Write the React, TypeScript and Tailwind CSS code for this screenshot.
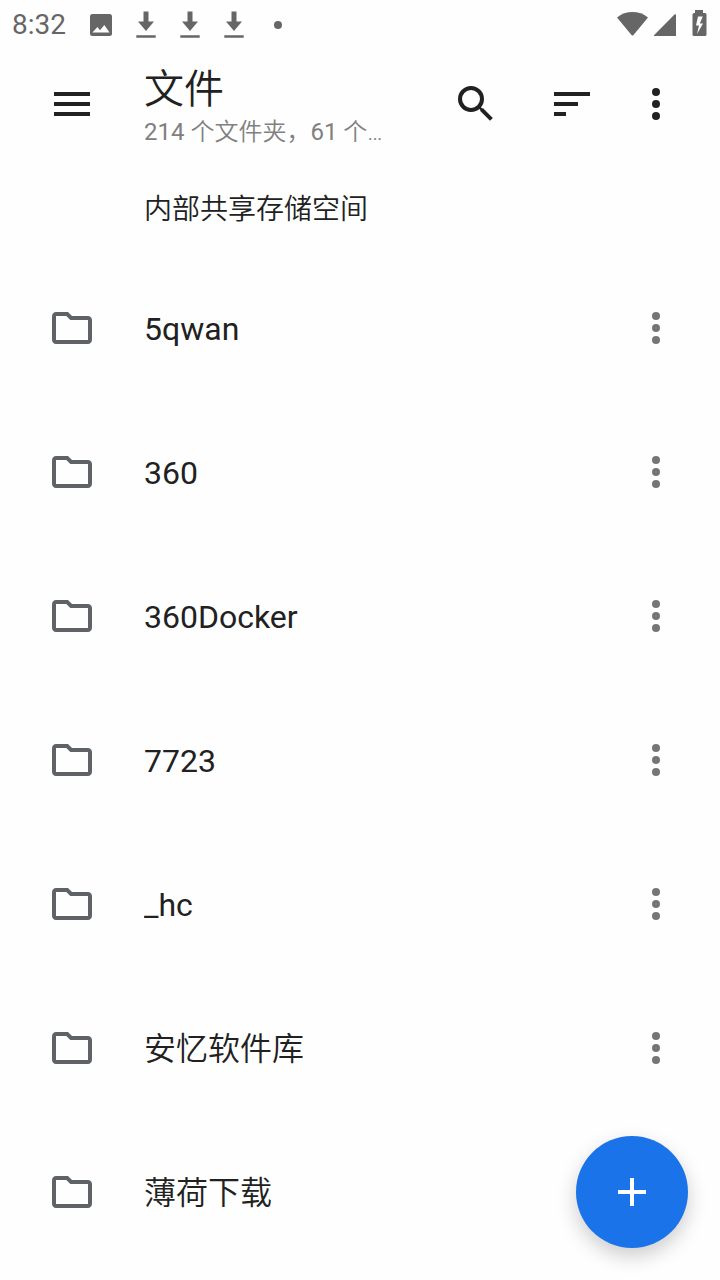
import type { ReactNode } from 'react'
import clsx from 'clsx'

const folders = ['5qwan', '360', '360Docker', '7723', '_hc', '安忆软件库', '薄荷下载']

// Chinese names are set a little lighter than latin ones
const isChinese = (text: string) => /[\u4e00-\u9fff]/.test(text)

function Icon({ children }: { children: ReactNode }) {
    return (
        <svg viewBox="0 0 24 24" className="size-12 shrink-0" fill="currentColor" aria-hidden="true">
            {children}
        </svg>
    )
}

function MoreIcon() {
    return (
        <Icon>
            <circle cx="12" cy="6" r="2" />
            <circle cx="12" cy="12" r="2" />
            <circle cx="12" cy="18" r="2" />
        </Icon>
    )
}

function DownloadIcon() {
    return (
        <svg viewBox="0 0 20 28" className="h-7 w-5" fill="currentColor" aria-hidden="true">
            <path d="M7.5 .5h5v10h5.500L10 20 2 10.500h5.500zM.3 24.300h19.400v2.400H.3z" />
        </svg>
    )
}

function StatusBar() {
    return (
        <div className="flex h-12 items-center justify-between px-3 text-[#666666]">
            <div className="flex items-center gap-6 pt-0.5">
                <span className="text-[28px] leading-8">8:32</span>
                <svg viewBox="1 1 22 22" className="size-[22px]" fill="currentColor" aria-hidden="true">
                    <path
                        fillRule="evenodd"
                        d="M3.500 1h17A2.500 2.500 0 0 1 23 3.500v17a2.500 2.500 0 0 1-2.500 2.500h-17A2.500 2.500 0 0 1 1 20.500v-17A2.500 2.500 0 0 1 3.500 1zM3.500 19.500h17l-5.200-7.500-4.300 5.200-2.600-3.200z"
                    />
                </svg>
                <DownloadIcon />
                <DownloadIcon />
                <DownloadIcon />
                <div className="flex w-5 justify-center">
                    <span className="size-2 rounded-full bg-[#666666]" />
                </div>
            </div>
            <div className="flex items-center">
                <svg viewBox="0 0 32 28" className="h-7 w-8" fill="currentColor" aria-hidden="true">
                    <path d="M1 7.500C10 .2 23 .2 32 7.500L17.500 25Q16.500 26 15.500 25z" />
                </svg>
                <svg viewBox="0 0 28 28" className="size-7" fill="currentColor" aria-hidden="true">
                    <path d="M28 4.500V26H6.500Q5.500 26 6.200 25L26.500 4.500Q27.500 3.800 28 4.500z" />
                </svg>
                <svg viewBox="0 0 32 28" className="h-7 w-8" fill="currentColor" aria-hidden="true">
                    <path
                        fillRule="evenodd"
                        d="M19 0h8v3h2a1.500 1.500 0 0 1 1.500 1.500v20A1.500 1.500 0 0 1 29 26H18a1.500 1.500 0 0 1-1.500-1.500v-20A1.500 1.500 0 0 1 18 3h1zM22 6.500l-2 9h3l-2 8.500 6-10.500h-3.200l3-7z"
                    />
                </svg>
            </div>
        </div>
    )
}

export default function App() {
    return (
        <div className="min-h-screen bg-[#fefefe] pb-4 font-['Roboto','Noto_Sans_CJK_SC',sans-serif] text-[#212121]" lang="zh-CN">
            <StatusBar />

            <header className="flex h-28 items-center pl-12 pr-7">
                <button type="button" aria-label="菜单" className="mr-12">
                    <Icon>
                        <path d="M3 6h18v2H3zM3 11h18v2H3zM3 16h18v2H3z" />
                    </Icon>
                </button>
                <div className="min-w-0 flex-1 pt-2">
                    <h1 className="text-[40px] leading-12 font-[350]">文件</h1>
                    <p className="truncate text-[24px] leading-9 text-[#808080]">
                        214 <span className="font-[350]">个文件夹，</span>61 <span className="font-[350]">个…</span>
                    </p>
                </div>
                <button type="button" aria-label="搜索" className="flex w-24 justify-center">
                    <Icon>
                        <circle cx="9.5" cy="9.5" r="5.5" fill="none" stroke="currentColor" strokeWidth="2" />
                        <path d="M13.500 13.500l1.500 1.500" stroke="currentColor" strokeWidth="1.2" />
                        <path d="M14.700 14.700l5 5" stroke="currentColor" strokeWidth="2" />
                    </Icon>
                </button>
                <button type="button" aria-label="排序" className="flex w-24 justify-center">
                    <Icon>
                        <path d="M3 6h18v2H3zM3 11h12v2H3zM3 16h6v2H3z" />
                    </Icon>
                </button>
                <button type="button" aria-label="更多选项" className="flex w-18 justify-center">
                    <MoreIcon />
                </button>
            </header>

            <main>
                <h2 className="flex h-24 items-center pl-36 pt-1 text-[28px] leading-10 font-[350]">内部共享存储空间</h2>
                <ul>
                    {folders.map((name) => (
                        <li key={name} className="flex h-36 items-center pl-12 pr-10">
                            <button type="button" className="flex min-w-0 flex-1 items-center gap-12 text-left">
                                <span className="text-[#5f6368]">
                                    <Icon>
                                        <path d="M9.170 6l2 2H20v10H4V6h5.170M10 4H4c-1.100 0-1.990.900-1.990 2L2 18c0 1.100.900 2 2 2h16c1.100 0 2-.900 2-2V8c0-1.100-.900-2-2-2h-8l-2-2z" />
                                    </Icon>
                                </span>
                                <span className={clsx('truncate pt-0.5 text-[32px] leading-12', isChinese(name) && 'font-[350]')}>
                                    {name}
                                </span>
                            </button>
                            <button type="button" aria-label={`${name} 更多选项`} className="text-[#757575]">
                                <MoreIcon />
                            </button>
                        </li>
                    ))}
                </ul>
            </main>

            <button
                type="button"
                aria-label="新建"
                className="fixed right-8 bottom-8 flex size-28 items-center justify-center rounded-full bg-[#1a73e8] text-white shadow-[0_8px_20px_rgba(0,0,0,0.2)]"
            >
                <Icon>
                    <path d="M11 5h2v6h6v2h-6v6h-2v-6H5v-2h6z" />
                </Icon>
            </button>
        </div>
    )
}
